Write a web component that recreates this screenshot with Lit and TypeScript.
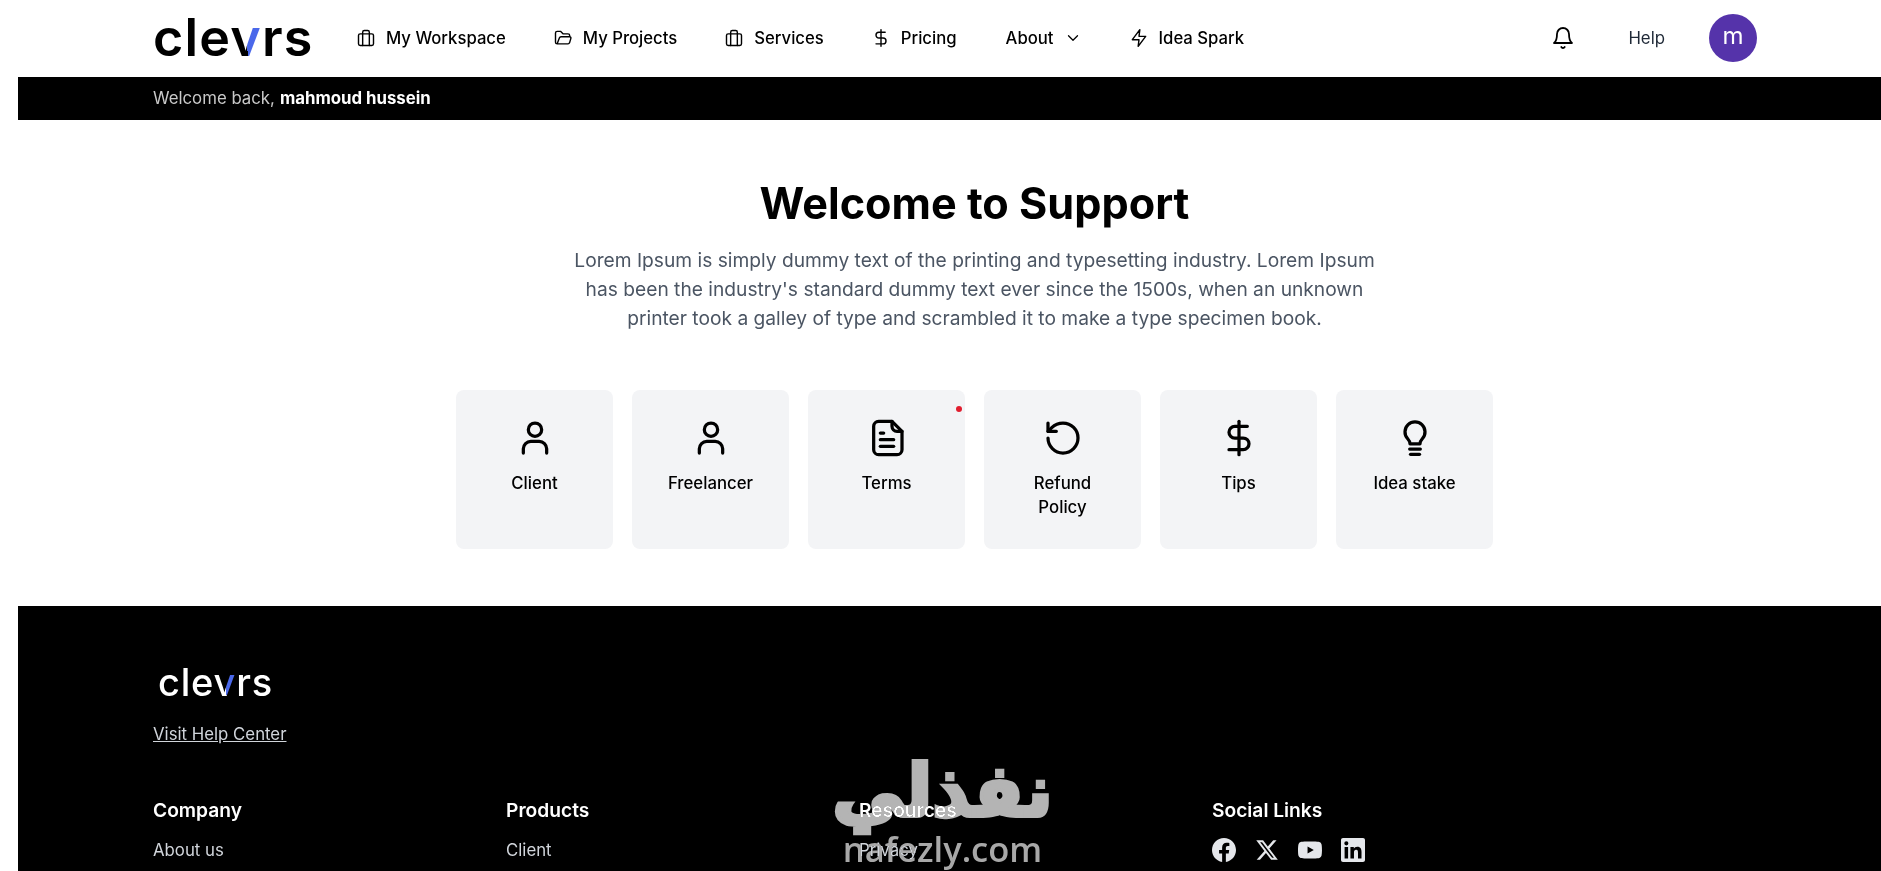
import { LitElement, html, css, svg } from "lit";
import { customElement } from "lit/decorators.js";

const s = (body: unknown, cls = "ic") => html`<svg class=${cls} viewBox="0 0 24 24" fill="none" stroke="currentColor" stroke-width="2" stroke-linecap="round" stroke-linejoin="round">${body}</svg>`;

const icons: Record<string, unknown> = {
  brief: svg`<rect x="3" y="7" width="18" height="14" rx="2"/><path d="M8 21V5a2 2 0 0 1 2-2h4a2 2 0 0 1 2 2v16"/>`,
  folder: svg`<path d="M5 19l2.76-7.2A2 2 0 0 1 9.6 10.5H20a1.5 1.5 0 0 1 1.45 1.9l-1.6 5.4A2 2 0 0 1 17.9 19H5a2 2 0 0 1-2-2V6a2 2 0 0 1 2-2h4l3 3h6a2 2 0 0 1 2 2v1.5"/>`,
  dollar: svg`<path d="M12 2v20"/><path d="M17 5H9.5a3.5 3.5 0 0 0 0 7h5a3.5 3.5 0 0 1 0 7H6"/>`,
  chevron: svg`<path d="M6 9l6 6 6-6"/>`,
  bolt: svg`<path d="M13 2L4 14h8l-1 8 9-12h-8l1-8z"/>`,
  bell: svg`<path d="M6 8a6 6 0 0 1 12 0c0 7 3 9 3 9H3s3-2 3-9"/><path d="M10.3 21a1.94 1.94 0 0 0 3.4 0"/>`,
  user: svg`<circle cx="12" cy="7" r="4"/><path d="M5 21v-2.5A4.5 4.5 0 0 1 9.5 14h5a4.5 4.5 0 0 1 4.5 4.5V21"/>`,
  doc: svg`<path d="M7 2h8l6 6v11a3 3 0 0 1-3 3H7a3 3 0 0 1-3-3V5a3 3 0 0 1 3-3z"/><path d="M15 2v3a3 3 0 0 0 3 3h3"/><path d="M8 9h2"/><path d="M8 13h8"/><path d="M8 17h8"/>`,
  undo: svg`<path d="M3 12a9 9 0 1 0 9-9 9.75 9.75 0 0 0-6.74 2.74L3 8"/><path d="M3 3v5h5"/>`,
  bulb: svg`<path d="M9 15.5c0-1.5-.7-2.3-1.5-3.2A6 6 0 1 1 16.5 12.3c-.8.9-1.5 1.7-1.5 3.2z"/><path d="M8.8 18.6h6.4"/><path d="M9.3 21.8h5.4"/>`,
};

const nav = [
  { i: "brief", t: "My Workspace" },
  { i: "folder", t: "My Projects" },
  { i: "brief", t: "Services" },
  { i: "dollar", t: "Pricing" },
];

const cards = [
  { i: "user", t: "Client" },
  { i: "user", t: "Freelancer" },
  { i: "doc", t: "Terms", dot: true },
  { i: "undo", t: "Refund Policy" },
  { i: "dollar", t: "Tips" },
  { i: "bulb", t: "Idea stake" },
];

const cols = [
  { h: "Company", l: "About us" },
  { h: "Products", l: "Client" },
  { h: "Resources", l: "Privacy" },
];

@customElement("app-root")
export class AppRoot extends LitElement {
  static styles = css`
    :host { display: block; position: relative; height: 871px; overflow: hidden; background: #fff; font-family: Inter, "Liberation Sans", sans-serif; color: #000; }
    * { box-sizing: border-box; }
    .page { margin-left: 18px; }
    .ic { width: 20px; height: 20px; flex: none; stroke-width: 1.7; }
    .top { height: 77px; display: flex; align-items: center; padding: 0 124px 1px 135px; }
    .logo { font: 600 52px/1 "Inter", sans-serif; letter-spacing: 1.2px; width: 160px; flex: none; white-space: nowrap; }
    .v { background: linear-gradient(82deg, currentColor 49%, #4a68ea 49%); -webkit-background-clip: text; background-clip: text; -webkit-text-fill-color: transparent; }
    nav { display: flex; align-items: center; gap: 47px; margin-left: 43px; flex: 1; }
    .item { display: flex; align-items: center; gap: 10px; font-size: 16.7px; font-weight: 500; line-height: 24px; white-space: nowrap; }
    .about { gap: 10px; margin-left: 2px; }
    .chev { width: 18px; height: 18px; }
    .right { display: flex; align-items: center; }
    .bell { width: 24px; height: 24px; stroke-width: 1.8; margin-right: 53px; }
    .help { font-size: 16.8px; color: #1f2937; margin-right: 44px; }
    .avatar { width: 48px; height: 48px; border-radius: 50%; background: #5533aa; color: #fff; display: flex; align-items: center; justify-content: center; font-size: 24px; line-height: 1; padding-bottom: 4px; }
    .bar { height: 43px; background: #000; color: #c9c9c9; padding: 0 0 2px 135px; display: flex; align-items: center; font-size: 16.8px; }
    .bar b { color: #fff; font-weight: 700; margin-left: 5px; }
    main { height: 486px; padding-left: 436px; width: 1477px; display: flex; flex-direction: column; align-items: center; }
    h1 { margin: 59px 0 0; font-size: 43.2px; line-height: 48px; font-weight: 700; letter-spacing: 0; }
    .lead { margin: 19px 0 0; width: 832px; text-align: center; font-size: 19.2px; line-height: 28.8px; color: #4b5563; }
    .cards { display: flex; gap: 19px; margin-top: 58px; }
    .card { width: 157px; height: 159px; position: relative; background: #f3f4f6; border-radius: 8px; padding: 28px 16px 0; display: flex; flex-direction: column; align-items: center; text-align: center; }
    .card .ic { width: 40px; height: 40px; stroke-width: 1.95; }
    .lbl { font-size: 16.8px; font-weight: 500; line-height: 24px; margin-top: 13px; width: 90px; }
    .wide .lbl { width: auto; }
    .dot { position: absolute; top: 16px; right: 3px; width: 6px; height: 6px; border-radius: 50%; background: #e11d2e; }
    footer { background: #000; color: #d1d5db; height: 265px; padding: 54px 135px 0; position: relative; }
    .flogo { font: 500 38px/44px "Inter", sans-serif; color: #fff; margin-left: 5px; letter-spacing: .8px; }
    .visit { display: block; margin-top: 18px; font-size: 16.8px; line-height: 24px; color: #d1d5db; text-decoration: underline; }
    .grid { display: grid; grid-template-columns: repeat(4, 353px); margin-top: 50px; }
    h4 { margin: 0; color: #fff; font-size: 19.2px; line-height: 28px; font-weight: 600; }
    .link { margin-top: 14px; font-size: 16.8px; line-height: 24px; }
    .soc { display: flex; gap: 19px; margin-top: 14px; color: #e5e7eb; }
    .soc svg { width: 24px; height: 24px; flex: none; fill: currentColor; }
    .mark { position: absolute; left: 835px; top: 749px; width: 215px; display: flex; flex-direction: column; align-items: center; color: #b4b4b4; mix-blend-mode: lighten; pointer-events: none; font-family: "DejaVu Sans", sans-serif; }
    .ar { font-size: 72px; font-weight: 700; line-height: 84px; white-space: nowrap; -webkit-text-stroke: 4px #b4b4b4; }
    .en { font-size: 34.5px; line-height: 36px; margin-top: -2px; white-space: nowrap; font-family: "Open Sans", sans-serif; font-weight: 600; color: #a8a8a8; }
  `;

  render() {
    return html`
      <div class="page">
        <header class="top">
          <div class="logo">cle<span class="v">v</span>rs</div>
          <nav>
            ${nav.map((n) => html`<div class="item">${s(icons[n.i])}<span>${n.t}</span></div>`)}
            <div class="item about"><span>About</span>${s(icons.chevron, "ic chev")}</div>
            <div class="item">${s(icons.bolt)}<span>Idea Spark</span></div>
          </nav>
          <div class="right">
            ${s(icons.bell, "ic bell")}
            <span class="help">Help</span>
            <div class="avatar">m</div>
          </div>
        </header>
        <div class="bar">Welcome back,<b>mahmoud hussein</b></div>
        <main>
          <h1>Welcome to Support</h1>
          <p class="lead">Lorem Ipsum is simply dummy text of the printing and typesetting industry. Lorem Ipsum has been the industry's standard dummy text ever since the 1500s, when an unknown printer took a galley of type and scrambled it to make a type specimen book.</p>
          <div class="cards">
            ${cards.map((c) => html`<div class="card ${c.t === "Freelancer" || c.t === "Idea stake" ? "wide" : ""}">
              ${c.dot ? html`<span class="dot"></span>` : ""}
              ${s(icons[c.i])}
              <div class="lbl">${c.t}</div>
            </div>`)}
          </div>
        </main>
        <footer>
          <div class="flogo">cle<span class="v">v</span>rs</div>
          <a class="visit">Visit Help Center</a>
          <div class="grid">
            ${cols.map((c) => html`<div><h4>${c.h}</h4><div class="link">${c.l}</div></div>`)}
            <div>
              <h4>Social Links</h4>
              <div class="soc">
                <svg viewBox="0 0 24 24"><path d="M24 12.07C24 5.4 18.63 0 12 0S0 5.4 0 12.07c0 6.03 4.39 11.02 10.13 11.93v-8.44H7.08v-3.49h3.05V9.41c0-3.02 1.79-4.69 4.53-4.69 1.31 0 2.68.24 2.68.24v2.97h-1.51c-1.49 0-1.96.93-1.96 1.89v2.25h3.33l-.53 3.49h-2.8V24C19.61 23.09 24 18.1 24 12.07z"/></svg>
                <svg viewBox="0 0 24 24"><path d="M18.24 2.25h3.31l-7.23 8.26 8.5 11.24h-6.66l-5.21-6.82-5.97 6.82H1.68l7.73-8.84L1.25 2.25h6.83l4.71 6.23zm-1.16 17.52h1.83L7.08 4.13H5.12z"/></svg>
                <svg viewBox="0 0 24 24"><path d="M23.5 6.2a3 3 0 0 0-2.1-2.14C19.5 3.55 12 3.55 12 3.55s-7.5 0-9.4.5A3 3 0 0 0 .5 6.2C0 8.1 0 12 0 12s0 3.9.5 5.8a3 3 0 0 0 2.1 2.14c1.9.5 9.4.5 9.4.5s7.5 0 9.4-.5a3 3 0 0 0 2.1-2.14c.5-1.9.5-5.8.5-5.8s0-3.9-.5-5.8zM9.55 15.57V8.43L15.82 12z"/></svg>
                <svg viewBox="0 0 24 24"><path d="M22 0H2C.9 0 0 .9 0 2v20c0 1.1.9 2 2 2h20c1.1 0 2-.9 2-2V2c0-1.1-.9-2-2-2zM7.1 20.5H3.6V9h3.5zM5.34 7.43a2.06 2.06 0 1 1 0-4.12 2.06 2.06 0 0 1 0 4.12zM20.5 20.5H17v-5.6c0-1.34-.03-3.06-1.87-3.06-1.87 0-2.15 1.46-2.15 2.96v5.7H9.43V9h3.4v1.56h.05c.47-.9 1.64-1.85 3.37-1.85 3.6 0 4.27 2.37 4.27 5.46z"/></svg>
              </div>
            </div>
          </div>
        </footer>
      </div>
      <div class="mark"><div class="ar">نفذلي</div><div class="en">nafezly.com</div></div>
    `;
  }
}
